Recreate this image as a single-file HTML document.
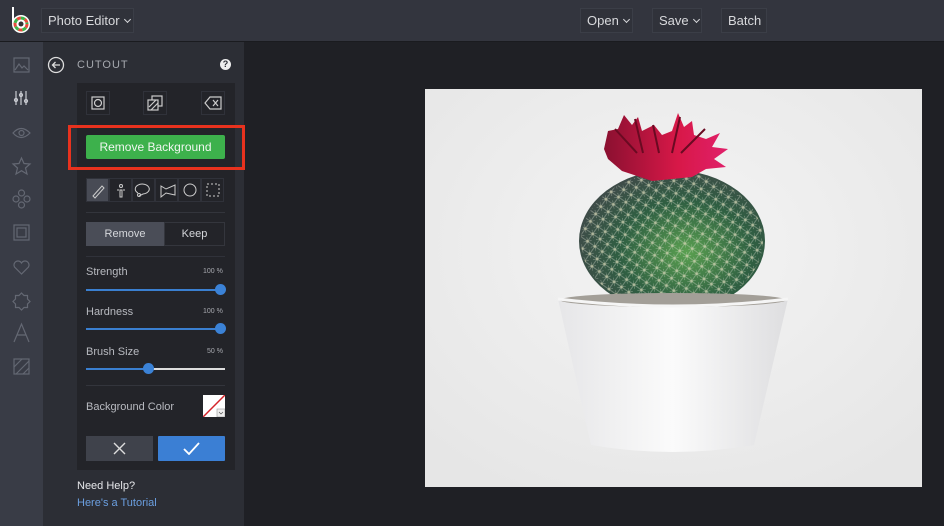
<!DOCTYPE html>
<html><head><meta charset="utf-8"><style>
*{margin:0;padding:0;box-sizing:border-box}
body{width:944px;height:526px;overflow:hidden;background:#1f2025;font-family:"Liberation Sans",sans-serif;position:relative;color:#c9cbd0}
.abs{position:absolute}
.top{left:0;top:0;width:944px;height:42px;background:#33353e;border-bottom:1px solid #1a1b1f}
.btn{position:absolute;top:8px;height:25px;border:1px solid #3b3e47;background:#30323a;color:#d8d9dc;font-size:13px;line-height:23px;padding:0 6px;white-space:nowrap}
.chev{display:inline-block;width:5px;height:5px;border-right:1.3px solid #d8d9dc;border-bottom:1.3px solid #d8d9dc;transform:rotate(45deg);margin-left:5px;vertical-align:3px}
.rail{left:0;top:42px;width:43px;height:484px;background:#393c46}
.panel{left:43px;top:42px;width:201px;height:484px;background:#2c2e35}
.box{left:77px;top:83px;width:158px;height:387px;background:#232429}
.lbl{font-size:11px;color:#b8bac0}
.pct{font-size:7px;color:#a8aab0}
.track{height:2px;background:#3a7fd0}
.knob{width:11px;height:11px;border-radius:50%;background:#3b82d6}
.tool{position:absolute;top:178px;width:23px;height:24px;border:1px solid #30323a}
svg{position:absolute}
</style></head><body>
<div class="abs top"></div>
<svg style="left:10px;top:6px" width="24" height="30" viewBox="0 0 24 30"><line x1="3" y1="1" x2="3" y2="17" stroke="#fff" stroke-width="2"/><circle cx="11" cy="18" r="9" fill="#fff"/><circle cx="11" cy="18" r="6" fill="none" stroke="#e74c3c" stroke-width="3" stroke-dasharray="4 4"/><circle cx="11" cy="18" r="6" fill="none" stroke="#3cb54a" stroke-width="3" stroke-dasharray="4 4" stroke-dashoffset="4"/><circle cx="11" cy="18" r="2.5" fill="#333"/></svg>
<div class="btn" style="left:41px;width:93px">Photo Editor<span class="chev"></span></div>
<div class="btn" style="left:580px;width:53px">Open<span class="chev"></span></div>
<div class="btn" style="left:652px;width:50px">Save<span class="chev"></span></div>
<div class="btn" style="left:721px;width:46px">Batch</div>
<div class="abs rail"></div>
<svg style="left:11px;top:55px" width="22" height="330" viewBox="0 0 22 330" fill="none" stroke="#646873" stroke-width="1.2">
<rect x="3" y="3" width="15" height="14"/><path d="M4 15l4-6 3 4 2-2 4 4"/>
<g stroke="#c8cad0"><path d="M5 36v14M10 36v14M15 36v14"/><circle cx="5" cy="45" r="1.5"/><circle cx="10" cy="40" r="1.5"/><circle cx="15" cy="46" r="1.5"/></g>
<path d="M2 78q8-9 17 0q-9 9-17 0z"/><circle cx="10.5" cy="78" r="2.5"/>
<path d="M10.5 103l2.5 5.5 6 .5-4.5 4 1.5 6-5.5-3.3-5.5 3.3 1.5-6-4.5-4 6-.5z"/>
<circle cx="10.5" cy="138" r="3"/><circle cx="5" cy="144" r="3"/><circle cx="16" cy="144" r="3"/><circle cx="10.5" cy="150" r="3"/>
<rect x="3" y="170" width="15" height="15"/><rect x="6" y="173" width="9" height="9"/>
<path d="M10.5 219l-7-7a4 4 0 0 1 7-4 4 4 0 0 1 7 4z"/>
<path d="M10.5 238l2.5 2.5h3.5v3.5l2.5 2.5-2.5 2.5v3.5h-3.5l-2.5 2.5-2.5-2.5h-3.5v-3.5l-2.5-2.5 2.5-2.5v-3.5h3.5z"/>
<path d="M3 287l7.5-18 7.5 18M6 280h9"/>
<rect x="3" y="304" width="15" height="15"/><path d="M3 312l8-8M5 319l13-13M12 319l6-6"/>
</svg>
<div class="abs panel"></div>
<svg style="left:47px;top:56px" width="18" height="18"><circle cx="9" cy="9" r="7.5" fill="none" stroke="#ddd" stroke-width="1.3"/><path d="M13 9H5.5M8.5 6l-3 3 3 3" fill="none" stroke="#ddd" stroke-width="1.3"/></svg>
<div class="abs" style="left:77px;top:59px;font-size:11px;letter-spacing:1px;color:#a5a8ae">CUTOUT</div>
<div class="abs" style="left:220px;top:59px;width:11px;height:11px;border-radius:50%;background:#eee;color:#2c2e35;font-size:9px;font-weight:bold;text-align:center;line-height:11px">?</div>
<div class="abs box"></div>
<div class="abs" style="left:86px;top:91px;width:24px;height:24px;border:1px solid #30323a"></div>
<svg style="left:91px;top:96px" width="14" height="14" fill="none" stroke="#ccc" stroke-width="1.2"><rect x="1" y="1" width="12" height="12"/><circle cx="7" cy="7" r="3.5"/></svg>
<div class="abs" style="left:143px;top:91px;width:24px;height:24px;border:1px solid #30323a"></div>
<svg style="left:147px;top:95px" width="16" height="16" fill="none" stroke="#ccc" stroke-width="1.2"><rect x="5" y="1" width="10" height="10"/><rect x="1" y="5" width="10" height="10" fill="#232429"/><path d="M2 12l7-7M4 15l7-7"/></svg>
<div class="abs" style="left:201px;top:91px;width:24px;height:24px;border:1px solid #30323a"></div>
<svg style="left:204px;top:96px" width="18" height="14" fill="none" stroke="#ccc" stroke-width="1.2"><path d="M6 1h11v12H6L1 7z"/><path d="M9 4l5 6M14 4l-5 6"/></svg>
<div class="abs" style="left:68px;top:125px;width:177px;height:45px;border:3px solid #e8321e"></div>
<div class="abs" style="left:86px;top:135px;width:139px;height:24px;background:#3db14c;border-radius:2px;font-size:12px;text-align:center;line-height:24px;color:#f0f6f0">Remove Background</div>
<div class="tool" style="left:86px;background:#484b55"></div>
<div class="tool" style="left:109px"></div><div class="tool" style="left:132px"></div><div class="tool" style="left:155px"></div><div class="tool" style="left:178px"></div><div class="tool" style="left:201px"></div>
<svg style="left:86px;top:178px" width="140" height="24" fill="none" stroke="#ccc" stroke-width="1">
<path d="M7 18l9-10 2 2-9 10z"/>
<circle cx="35" cy="8" r="1.5"/><path d="M32 11v2M38 11v2M34 12h2v7h-2z"/>
<path d="M52 15a7 5 0 1 1 5 1l-4 2" /><circle cx="53" cy="17" r="1.5"/>
<path d="M75 8l5 3 9-4v10l-9 -2-5 4z"/>
<circle cx="104" cy="12" r="6"/>
<rect x="121" y="6" width="12" height="12" stroke-dasharray="2 2"/>
</svg>
<div class="abs" style="left:86px;top:212px;width:139px;height:1px;background:#33353c"></div>
<div class="abs" style="left:86px;top:222px;width:78px;height:24px;background:#4a4d57;color:#d5d7db;font-size:11px;text-align:center;line-height:24px">Remove</div>
<div class="abs" style="left:164px;top:222px;width:61px;height:24px;border:1px solid #34363d;color:#d5d7db;font-size:11px;text-align:center;line-height:22px">Keep</div>
<div class="abs" style="left:86px;top:256px;width:139px;height:1px;background:#30323a"></div>
<div class="abs lbl" style="left:86px;top:266px">Strength</div><div class="abs pct" style="left:203px;top:268px">100 %</div>
<div class="abs track" style="left:86px;top:289px;width:134px"></div><div class="abs knob" style="left:215px;top:284px"></div>
<div class="abs lbl" style="left:86px;top:306px">Hardness</div><div class="abs pct" style="left:203px;top:308px">100 %</div>
<div class="abs track" style="left:86px;top:328px;width:134px"></div><div class="abs knob" style="left:215px;top:323px"></div>
<div class="abs lbl" style="left:86px;top:346px">Brush Size</div><div class="abs pct" style="left:207px;top:348px">50 %</div>
<div class="abs track" style="left:86px;top:368px;width:62px"></div><div class="abs" style="left:148px;top:368px;width:77px;height:2px;background:#ddd"></div><div class="abs knob" style="left:143px;top:363px"></div>
<div class="abs" style="left:86px;top:385px;width:139px;height:1px;background:#33353c"></div>
<div class="abs lbl" style="left:86px;top:401px">Background Color</div>
<svg style="left:203px;top:395px" width="22" height="22"><rect width="22" height="22" fill="#fff"/><line x1="0" y1="22" x2="22" y2="0" stroke="#d4242b" stroke-width="1.5"/><rect x="14" y="14" width="8" height="8" fill="#eee" stroke="#999" stroke-width=".6"/><path d="M16 17l2 2 2-2" stroke="#555" fill="none" stroke-width=".7"/></svg>
<div class="abs" style="left:86px;top:436px;width:67px;height:25px;background:#3f424b"></div>
<svg style="left:113px;top:442px" width="13" height="13" stroke="#ddd" stroke-width="1.4"><path d="M1 1l11 11M12 1L1 12"/></svg>
<div class="abs" style="left:158px;top:436px;width:67px;height:25px;background:#3b7fd4;border-radius:1px"></div>
<svg style="left:183px;top:442px" width="17" height="13" fill="none" stroke="#fff" stroke-width="1.8"><path d="M1 7l5 5 10-11"/></svg>
<div class="abs" style="left:77px;top:480px;font-size:11px;color:#e6e7ea">Need Help?</div>
<div class="abs" style="left:77px;top:497px;font-size:11px;color:#6b9fe0">Here's a Tutorial</div>
<svg style="left:425px;top:89px" width="497" height="398" viewBox="0 0 497 398">
<defs><radialGradient id="bg" cx="50%" cy="40%" r="70%"><stop offset="0" stop-color="#f4f4f4"/><stop offset="1" stop-color="#e6e6e6"/></radialGradient>
<radialGradient id="ball" cx="58%" cy="58%" r="60%"><stop offset="0" stop-color="#5aa050"/><stop offset=".6" stop-color="#2f5f42"/><stop offset="1" stop-color="#3e4c48"/></radialGradient>
<pattern id="sp" width="9" height="9" patternUnits="userSpaceOnUse" patternTransform="rotate(35)"><circle cx="4.5" cy="4.5" r="1.4" fill="#e0d890"/><path d="M0 4.5h9M4.5 0v9M1.5 1.5l6 6M7.5 1.5l-6 6" stroke="#d4d8cc" stroke-width=".5"/></pattern>
<linearGradient id="pot" x1="0" x2="1"><stop offset="0" stop-color="#e6e6e8"/><stop offset=".5" stop-color="#fbfbfb"/><stop offset="1" stop-color="#dedee0"/></linearGradient>
<linearGradient id="fl" x1="0" x2="1"><stop offset="0" stop-color="#8a1030"/><stop offset=".6" stop-color="#d81848"/><stop offset="1" stop-color="#e0206a"/></linearGradient></defs>
<rect width="497" height="398" fill="url(#bg)"/>
<ellipse cx="247" cy="152" rx="93" ry="71" fill="url(#ball)"/>
<ellipse cx="247" cy="152" rx="91" ry="69" fill="url(#sp)" opacity=".75"/>
<path d="M183 42l10-2 6-14 8 10 6-8 4 14 12-6 8 10 10-4 6-18 6 14 8-6 2 14 12 4 14-6-8 14 16 2-14 10 12 8-20 2-14 8-40 4-30-10-14-12-4-10z" fill="url(#fl)"/>
<path d="M190 40l22 24M210 30l8 34M228 36l6 28M255 28l-8 36M280 40l-24 24" stroke="#6a0a22" stroke-width="2" fill="none"/>
<path d="M133 210h230l-34 146q-81 14-163 0z" fill="url(#pot)"/>
<ellipse cx="248" cy="211" rx="113" ry="7" fill="#a39f98"/>
<path d="M133 210q115 14 230 0" stroke="#f5f5f5" stroke-width="3" fill="none"/>
</svg>
</body></html>
